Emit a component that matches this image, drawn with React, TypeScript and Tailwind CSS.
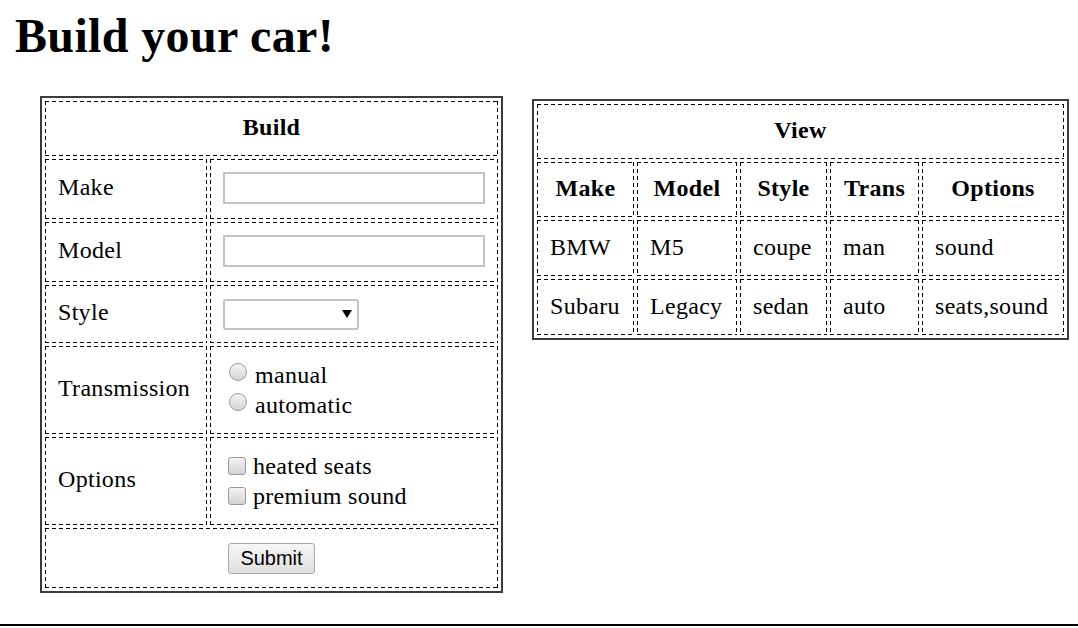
import React from "react";

const cell =
  "border border-transparent [background-origin:border-box] [background-image:linear-gradient(90deg,#000_4px,transparent_4px),linear-gradient(90deg,#000_4px,transparent_4px),linear-gradient(180deg,#000_4px,transparent_4px),linear-gradient(180deg,#000_4px,transparent_4px)] [background-size:7px_1px,7px_1px,1px_7px,1px_7px] [background-position:left_top,left_bottom,left_top,right_top] [background-repeat:repeat-x,repeat-x,repeat-y,repeat-y]";

function Radio({ label }: { label: string }) {
  return (
    <div className="flex items-start h-[30px] leading-[30px]">
      <span className="mt-[3px] ml-[6px] mr-[8px] w-[18px] h-[18px] rounded-full border border-[#9a9a9a] bg-gradient-to-b from-[#f4f4f4] to-[#d4d4d4] shrink-0" />
      <span>{label}</span>
    </div>
  );
}

function Check({ label }: { label: string }) {
  return (
    <div className="flex items-start h-[30px] leading-[30px]">
      <span className="mt-[6px] ml-[5px] mr-[7px] w-[18px] h-[18px] rounded-[3px] border border-[#9a9a9a] bg-gradient-to-b from-[#f4f4f4] to-[#d2d2d2] shrink-0" />
      <span>{label}</span>
    </div>
  );
}

export default function App() {
  const cars = [
    ["BMW", "M5", "coupe", "man", "sound"],
    ["Subaru", "Legacy", "sedan", "auto", "seats,sound"],
  ];
  return (
    <div className="w-[1078px] h-[628px] bg-white text-black flex flex-col overflow-hidden font-['Liberation_Serif',serif] text-[24px] leading-[28px] tracking-[0.3px]">
      <div className="flex-1 min-h-0">
        <h1 className="text-[48px] font-bold leading-[53px] pl-[15px] pt-[9px] tracking-[0.35px]">Build your car!</h1>
        <div className="flex items-start pl-[40px] mt-[34px] gap-[29px]">
          <table className="border-separate border-spacing-[3px] border-2 border-[#3c3c3c] w-[463px]">
            <tbody>
              <tr>
                <th colSpan={2} className={`${cell} h-[55px] pb-[4px] text-center font-bold`}>Build</th>
              </tr>
              <tr>
                <td className={`${cell} w-[162px] h-[60px] pl-[12px] pr-[4px] pb-[4px]`}>Make</td>
                <td className={`${cell} px-[12px] pb-[2px]`}>
                  <input type="text" className="block w-full h-[32px] border-2 border-[#c4c4c4] bg-white outline-none" />
                </td>
              </tr>
              <tr>
                <td className={`${cell} h-[60px] pl-[12px] pr-[4px] pb-[4px]`}>Model</td>
                <td className={`${cell} px-[12px] pb-[2px]`}>
                  <input type="text" className="block w-full h-[32px] border-2 border-[#c4c4c4] bg-white outline-none" />
                </td>
              </tr>
              <tr>
                <td className={`${cell} h-[58px] pl-[12px] pr-[4px] pb-[4px]`}>Style</td>
                <td className={`${cell} px-[12px]`}>
                  <div className="w-[136px] h-[31px] border-2 border-[#c4c4c4] rounded-[3px] bg-white flex items-center justify-end pr-[5px]">
                    <svg width="10" height="8" viewBox="0 0 10 8">
                      <polygon points="0,0 10,0 5,8" fill="#000" />
                    </svg>
                  </div>
                </td>
              </tr>
              <tr>
                <td className={`${cell} h-[88px] pl-[12px] pr-[4px] pb-[4px]`}>Transmission</td>
                <td className={`${cell} px-[12px]`}>
                  <Radio label="manual" />
                  <Radio label="automatic" />
                </td>
              </tr>
              <tr>
                <td className={`${cell} h-[88px] pl-[12px] pr-[4px] pb-[4px]`}>Options</td>
                <td className={`${cell} px-[12px]`}>
                  <Check label="heated seats" />
                  <Check label="premium sound" />
                </td>
              </tr>
              <tr>
                <td colSpan={2} className={`${cell} h-[60px] text-center`}>
                  <button className="inline-block w-[87px] h-[31px] border border-[#a9a9a9] rounded-[3px] bg-gradient-to-b from-[#f6f6f6] to-[#dedede] font-['Liberation_Sans',sans-serif] text-[20px] leading-[29px] tracking-normal text-black">
                    Submit
                  </button>
                </td>
              </tr>
            </tbody>
          </table>

          <table className="mt-[3px] border-separate border-spacing-[3px] border-2 border-[#3c3c3c] w-[537px]">
            <tbody>
              <tr>
                <th colSpan={5} className={`${cell} h-[55px] pb-[4px] text-center font-bold`}>View</th>
              </tr>
              <tr>
                <th className={`${cell} h-[55px] pb-[4px] w-[97px] text-center font-bold`}>Make</th>
                <th className={`${cell} pb-[4px] w-[100px] text-center font-bold`}>Model</th>
                <th className={`${cell} pb-[4px] w-[87px] text-center font-bold`}>Style</th>
                <th className={`${cell} pb-[4px] w-[89px] text-center font-bold`}>Trans</th>
                <th className={`${cell} pb-[4px] w-[142px] text-center font-bold`}>Options</th>
              </tr>
              {cars.map((row) => (
                <tr key={row[0]}>
                  {row.map((v, i) => (
                    <td key={i} className={`${cell} h-[56px] pl-[12px] pr-[8px] pb-[3px] text-left`}>{v}</td>
                  ))}
                </tr>
              ))}
            </tbody>
          </table>
        </div>
      </div>
      <div className="h-[2px] bg-black shrink-0" />
      <div className="h-[2px] bg-white shrink-0" />
    </div>
  );
}
